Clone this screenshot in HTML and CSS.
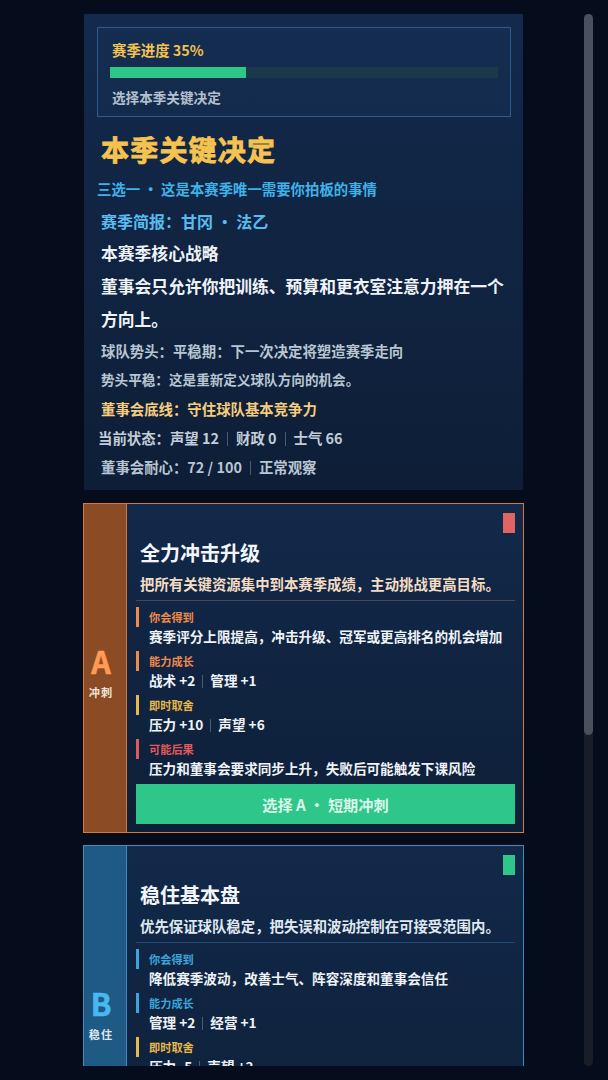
FILE: index.html
```html
<!DOCTYPE html>
<html lang="zh-CN">

<head>
    <meta charset="UTF-8">
    <meta name="viewport" content="width=device-width, initial-scale=1.0">
    <title>本季关键决定</title>
    <link rel="stylesheet" href="styles.css">
</head>

<body>
    <div class="scroll">
        <div class="column">

            <div class="season">
                <div class="progress-box">
                    <div class="progress-label">赛季进度 35%</div>
                    <div class="progress-track">
                        <div class="progress-fill" style="width: 35%"></div>
                    </div>
                    <div class="progress-note">选择本季关键决定</div>
                </div>
                <h1 class="season-title">本季关键决定</h1>
                <p class="season-hint">三选一 · 这是本赛季唯一需要你拍板的事情</p>
                <p class="season-brief">赛季简报：甘冈 · 法乙</p>
                <h2 class="strategy-title">本赛季核心战略</h2>
                <p class="strategy-text">董事会只允许你把训练、预算和更衣室注意力押在一个方向上。</p>
                <p class="info">球队势头：平稳期：下一次决定将塑造赛季走向</p>
                <p class="info small">势头平稳：这是重新定义球队方向的机会。</p>
                <p class="info gold">董事会底线：守住球队基本竞争力</p>
                <p class="info stats">当前状态：声望 12<span class="sep"></span>财政 0<span class="sep"></span>士气 66</p>
                <p class="info">董事会耐心：72 / 100<span class="sep"></span>正常观察</p>
            </div>

            <div class="option option-a">
                <div class="option-side">
                    <div class="option-letter">A</div>
                    <div class="option-tag">冲刺</div>
                </div>
                <div class="option-main">
                    <div class="option-top"><span class="marker"></span></div>
                    <h3 class="option-title">全力冲击升级</h3>
                    <p class="option-desc">把所有关键资源集中到本赛季成绩，主动挑战更高目标。</p>
                    <div class="option-list">
                        <div class="item">
                            <div class="item-label">你会得到</div>
                            <div class="item-value">赛季评分上限提高，冲击升级、冠军或更高排名的机会增加</div>
                        </div>
                        <div class="item">
                            <div class="item-label">能力成长</div>
                            <div class="item-value">战术 +2<span class="sep"></span>管理 +1</div>
                        </div>
                        <div class="item trade">
                            <div class="item-label">即时取舍</div>
                            <div class="item-value">压力 +10<span class="sep"></span>声望 +6</div>
                        </div>
                        <div class="item risk">
                            <div class="item-label">可能后果</div>
                            <div class="item-value">压力和董事会要求同步上升，失败后可能触发下课风险</div>
                        </div>
                    </div>
                    <button class="choose">选择 A · 短期冲刺</button>
                </div>
            </div>

            <div class="option option-b">
                <div class="option-side">
                    <div class="option-letter">B</div>
                    <div class="option-tag">稳住</div>
                </div>
                <div class="option-main">
                    <div class="option-top"><span class="marker"></span></div>
                    <h3 class="option-title">稳住基本盘</h3>
                    <p class="option-desc">优先保证球队稳定，把失误和波动控制在可接受范围内。</p>
                    <div class="option-list">
                        <div class="item">
                            <div class="item-label">你会得到</div>
                            <div class="item-value">降低赛季波动，改善士气、阵容深度和董事会信任</div>
                        </div>
                        <div class="item">
                            <div class="item-label">能力成长</div>
                            <div class="item-value">管理 +2<span class="sep"></span>经营 +1</div>
                        </div>
                        <div class="item trade">
                            <div class="item-label">即时取舍</div>
                            <div class="item-value">压力 -5<span class="sep"></span>声望 +2</div>
                        </div>
                        <div class="item risk">
                            <div class="item-label">可能后果</div>
                            <div class="item-value">成绩上限有限，难以冲击更高排名</div>
                        </div>
                    </div>
                    <button class="choose">选择 B · 稳健经营</button>
                </div>
            </div>

            <div class="option option-c">
                <div class="option-side">
                    <div class="option-letter">C</div>
                    <div class="option-tag">重建</div>
                </div>
                <div class="option-main">
                    <div class="option-top"><span class="marker"></span></div>
                    <h3 class="option-title">押注青训未来</h3>
                    <p class="option-desc">把资源投向年轻球员培养，用本季波动换取长期成长。</p>
                    <div class="option-list">
                        <div class="item">
                            <div class="item-label">你会得到</div>
                            <div class="item-value">青训潜力提升，未来赛季阵容上限提高</div>
                        </div>
                        <div class="item">
                            <div class="item-label">能力成长</div>
                            <div class="item-value">青训 +2<span class="sep"></span>战术 +1</div>
                        </div>
                        <div class="item trade">
                            <div class="item-label">即时取舍</div>
                            <div class="item-value">财政 -3<span class="sep"></span>士气 +4</div>
                        </div>
                        <div class="item risk">
                            <div class="item-label">可能后果</div>
                            <div class="item-value">本赛季成绩可能下滑，董事会耐心下降</div>
                        </div>
                    </div>
                    <button class="choose">选择 C · 长期建设</button>
                </div>
            </div>

        </div>
    </div>
    <div class="rail">
        <div class="thumb"></div>
    </div>
</body>

</html>
```

FILE: styles.css
```css
* {
    margin: 0;
    padding: 0;
    box-sizing: border-box;
}

html {
    overflow: hidden;
}

body {
    font-family: "Noto Sans CJK SC", "Noto Sans", sans-serif;
    font-weight: 700;
    background-color: #050d1c;
    padding: 14px 15px 14px 14px;
    display: flex;
}

/* 滚动区域 + 自绘滚动条 */
.scroll {
    flex: 1;
    height: 1052px;
    overflow-y: auto;
    scrollbar-width: none;
}

.rail {
    width: 9px;
    height: 1052px;
    background-color: #191d27;
    border-radius: 5px;
}

.thumb {
    height: 721px;
    background-color: #4a505d;
    border-radius: 5px;
}

.column {
    width: 441px;
    margin-left: 69px;
    padding-bottom: 32px;
    display: flex;
    flex-direction: column;
    gap: 12px;
}

/* 赛季面板 */
.season {
    margin: 0 1px 1px;
    padding: 13px 12px 9px 13px;
    background: linear-gradient(180deg, #132a4c 0%, #0e1e37 100%);
}

.progress-box {
    border: 1px solid #2b5b8c;
    padding: 12px 12px 9px;
    background-color: rgba(22, 52, 88, 0.35);
}

.progress-label {
    color: #f2c14e;
    font-size: 14.4px;
    line-height: 20px;
    padding-left: 2px;
}

.progress-track {
    height: 11px;
    margin-top: 7px;
    background-color: #1b394b;
}

.progress-fill {
    height: 100%;
    background-color: #2fc68a;
}

.progress-note {
    color: #b3c0ce;
    font-size: 13.6px;
    line-height: 20px;
    margin-top: 9px;
    padding-left: 2px;
}

.season-title {
    color: #f6c350;
    font-size: 28px;
    letter-spacing: 1.2px;
    line-height: 36px;
    margin-top: 14px;
    padding-left: 4px;
    -webkit-text-stroke: 0.8px #f6c350;
}

.season-hint {
    color: #3fb2ea;
    font-size: 14.4px;
    line-height: 22px;
    margin-top: 11px;
}

.season-brief {
    color: #57bdf0;
    font-size: 16px;
    line-height: 24px;
    margin-top: 9px;
    padding-left: 4px;
}

.strategy-title {
    color: #eef3f8;
    font-size: 16.8px;
    line-height: 33px;
    margin-top: 4px;
    padding-left: 4px;
}

.strategy-text {
    color: #eef3f8;
    font-size: 16.8px;
    line-height: 33px;
    padding-left: 4px;
}

.info {
    color: #b8c5d2;
    font-size: 14.4px;
    line-height: 29px;
    padding-left: 4px;
}

.info.small {
    font-size: 13.6px;
}

.info.gold {
    color: #f6cd7e;
}

.info.stats {
    color: #c2cdd8;
    padding-left: 1px;
}

.sep {
    display: inline-block;
    width: 1px;
    height: 14px;
    margin: 0 8px;
    vertical-align: -2px;
    background-color: #4a5a70;
}

/* 选项卡片 */
.option {
    display: flex;
    border: 1px solid var(--border);
}

.option-a {
    --border: #d5793f;
    --side: #8a4b25;
    --letter: #ff9b52;
    --accent: #f08a4a;
    --line: rgba(213, 121, 63, 0.35);
    --desc: #f4dcc2;
    --marker: #e06464;
}

.option-b {
    --border: #3c8cc4;
    --side: #1f5a85;
    --letter: #4ab8f0;
    --accent: #3aa6dc;
    --line: rgba(60, 140, 196, 0.35);
    --desc: #dfe8f0;
    --marker: #2fc68a;
}

.option-c {
    --border: #8a6cd0;
    --side: #4a3a7a;
    --letter: #b59cf5;
    --accent: #a88af0;
    --line: rgba(138, 108, 208, 0.35);
    --desc: #e4dcf5;
    --marker: #e8b84a;
}

.option-side {
    width: 43px;
    flex-shrink: 0;
    background-color: var(--side);
    border-right: 1px solid var(--border);
    display: flex;
    flex-direction: column;
    align-items: center;
    justify-content: center;
    padding: 9px 8px 0 0;
}

.option-letter {
    color: var(--letter);
    font-size: 30.4px;
    line-height: 32px;
    -webkit-text-stroke: 0.6px var(--letter);
}

.option-tag {
    color: #f0e4d8;
    font-size: 11.2px;
    line-height: 16px;
    letter-spacing: 1px;
    margin-top: 7px;
}

.option-b .option-tag {
    color: #dce9f3;
}

.option-main {
    flex: 1;
    padding: 9px 8px 8px 9px;
    background: linear-gradient(180deg, #12294a 0%, #0e1f38 100%);
}

.option-top {
    display: flex;
    justify-content: flex-end;
    height: 20px;
}

.marker {
    width: 12px;
    height: 20px;
    background-color: var(--marker);
}

.option-title {
    color: #f2f6fa;
    font-size: 20px;
    line-height: 24px;
    margin-top: 8px;
    padding-left: 4px;
}

.option-desc {
    color: var(--desc);
    font-size: 14.4px;
    line-height: 20px;
    margin-top: 9px;
    padding-left: 4px;
}

.option-list {
    margin-top: 6px;
    padding-top: 6px;
    border-top: 1px solid var(--line);
    display: flex;
    flex-direction: column;
    gap: 5px;
}

.item-label {
    color: var(--accent);
    border-left: 3px solid var(--accent);
    font-size: 11.2px;
    line-height: 20px;
    padding-left: 10px;
}

.item.trade .item-label {
    color: #e8b84a;
    border-left-color: #e8b84a;
}

.item.risk .item-label {
    color: #e05a5a;
    border-left-color: #e05a5a;
}

.item-value {
    color: #eef3f8;
    font-size: 13.6px;
    line-height: 19px;
    padding-left: 13px;
}

.item-value .sep {
    height: 13px;
    margin: 0 7px;
}

.choose {
    display: block;
    width: 100%;
    height: 40px;
    margin-top: 6px;
    border: none;
    background-color: #2fc68a;
    color: #dcf7ea;
    font-family: inherit;
    font-weight: 700;
    font-size: 15.2px;
    cursor: pointer;
}
```
